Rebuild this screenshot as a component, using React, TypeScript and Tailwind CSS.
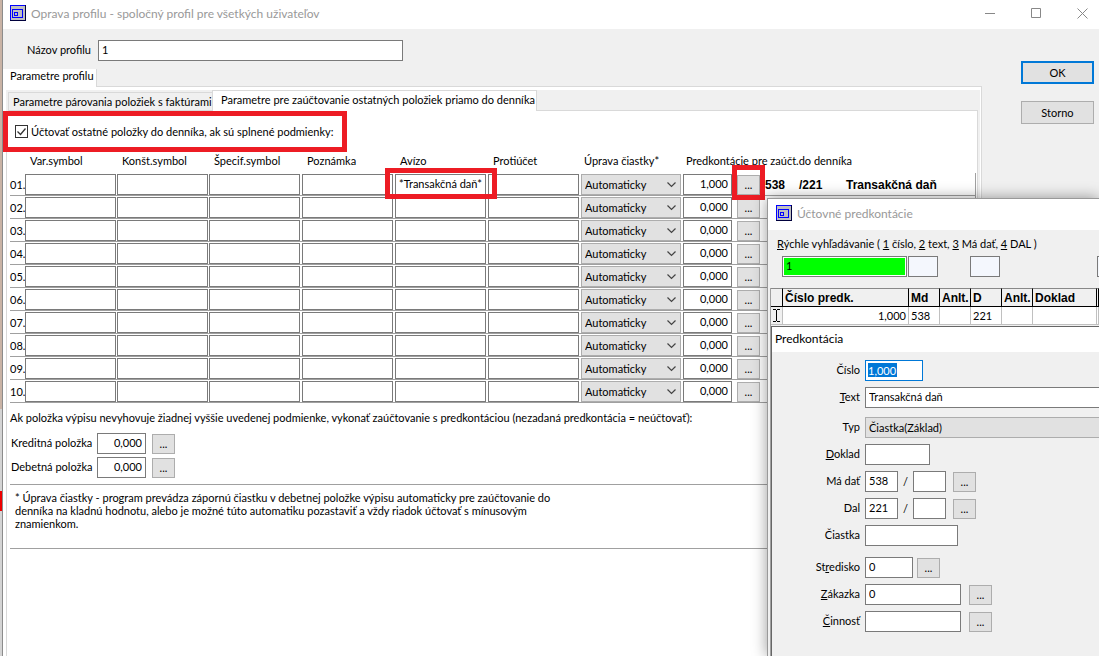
import type { ReactNode } from 'react';
import clsx from 'clsx';

const rows = Array.from({ length: 10 }, (_, i) => ({
  num: String(i + 1).padStart(2, '0'),
  avizo: i === 0 ? '*Transakčná daň*' : '',
  amount: i === 0 ? '1,000' : '0,000',
}));

const textColumns = ['Var.symbol', 'Konšt.symbol', 'Špecif.symbol', 'Poznámka', 'Avízo', 'Protiúčet'];

function AppIcon() {
  return (
    <svg className="w-4 h-4 shrink-0" viewBox="0 0 16 16" shapeRendering="crispEdges">
      <rect width="16" height="16" fill="#00003c" />
      <rect width="15" height="15" fill="#0000ff" />
      <rect x="1" y="1" width="14" height="14" fill="#c0c0c0" />
      <rect x="2.5" y="4.5" width="10" height="8" fill="none" stroke="#0000ff" />
      <rect x="4.5" y="7.5" width="3" height="3" fill="none" stroke="#0000ff" />
    </svg>
  );
}

function DotsButton({ label }: { label: string }) {
  return (
    <button
      type="button"
      aria-label={label}
      className="block shrink-0 w-[23px] h-[20px] border border-[#adadad] bg-[#e1e1e1] text-center leading-[18px]"
    >
      ...
    </button>
  );
}

type BoxProps = { id?: string; label?: string; value?: string; tinted?: boolean; className?: string };

function TextBox({ id, label, value = '', tinted, className }: BoxProps) {
  return (
    <input
      id={id}
      type="text"
      aria-label={label}
      defaultValue={value}
      className={clsx(
        'block h-[21px] border border-[#7a7a7a] px-[3px] pb-[3px] outline-none',
        tinted ? 'bg-[#f4f7fd]' : 'bg-white',
        className
      )}
    />
  );
}

function Field({ id, label, children }: { id: string; label: ReactNode; children: ReactNode }) {
  return (
    <div className="flex items-center">
      <label htmlFor={id} className="w-[88px] mr-[5px] pb-[2px] shrink-0 text-right">
        {label}
      </label>
      {children}
    </div>
  );
}

// Rows of matching conditions with the posting rule for each
function ConditionsTable() {
  return (
    <table className="w-full table-fixed border-separate border-spacing-0">
      <colgroup>
        <col className="w-[15px]" />
        <col className="w-[92px]" />
        <col className="w-[92px]" />
        <col className="w-[93px]" />
        <col className="w-[93px]" />
        <col className="w-[93px]" />
        <col className="w-[93px]" />
        <col className="w-[102px]" />
        <col className="w-[54px]" />
        <col className="w-[28px]" />
        <col />
      </colgroup>
      <thead>
        <tr className="h-[21px] text-left align-top leading-[18px]">
          <td className="p-0" />
          {textColumns.map((name) => (
            <th key={name} className="p-0 pl-[5px] font-normal">
              {name}
            </th>
          ))}
          <th className="p-0 pl-[3px] font-normal">Úprava čiastky*</th>
          <th colSpan={3} className="p-0 pl-[3px] font-normal">
            Predkontácie pre zaúčt.do denníka
          </th>
        </tr>
      </thead>
      <tbody>
        {rows.map((row, i) => (
          <tr key={row.num} className="h-[23px] *:border-b *:border-[#a0a0a0] *:p-0">
            <td className="whitespace-nowrap">{row.num}.</td>
            {textColumns.map((name) => (
              <td key={name} className="relative">
                <TextBox
                  label={`${name} ${row.num}`}
                  value={name === 'Avízo' ? row.avizo : ''}
                  className="w-[91px] mt-px"
                />
                {i === 0 && name === 'Avízo' && (
                  <span className="absolute z-10 -left-[10px] -top-[5px] w-[112px] h-[31px] border-5 border-[#ed1c24] pointer-events-none" />
                )}
              </td>
            ))}
            <td>
              <div className="relative mt-px w-[100px]">
                <select
                  aria-label={`Úprava čiastky ${row.num}`}
                  className="block appearance-none w-full h-[21px] border border-[#adadad] bg-[#e1e1e1] pl-[3px]"
                >
                  <option>Automaticky</option>
                </select>
                <svg className="absolute right-[5px] top-2 w-[9px] h-[6px] pointer-events-none" viewBox="0 0 9 6">
                  <path d="M.5.5l4 4 4-4" fill="none" stroke="#444" strokeWidth="1.2" />
                </svg>
              </div>
            </td>
            <td>
              <TextBox label={`Predkontácia ${row.num}`} value={row.amount} className="w-[49px] mt-px text-right" />
            </td>
            <td className="relative align-bottom">
              <DotsButton label={`Vybrať predkontáciu ${row.num}`} />
              {i === 0 && (
                <span className="absolute z-10 -left-[5px] -top-[8px] w-[33px] h-[35px] border-5 border-[#ed1c24] pointer-events-none" />
              )}
            </td>
            <td className="border-r font-['Liberation_Sans'] text-[12px] font-bold whitespace-nowrap">
              {i === 0 && (
                <div className="flex pt-[3px]">
                  <span className="w-[34px]">538</span>
                  <span className="w-[47px]">/221</span>
                  <span>Transakčná daň</span>
                </div>
              )}
            </td>
          </tr>
        ))}
      </tbody>
    </table>
  );
}

function PostingDialog() {
  return (
    <section className="flex-1 border-l border-t border-[#666] bg-[#f0f0f0]">
      <h2 className="h-[25px] bg-white pl-[3px] text-[12px] leading-[23px]">Predkontácia</h2>
      <form className="pt-2">
        <div className="flex flex-col gap-1.5">
          <Field id="cislo" label="Číslo">
            <div className="h-[21px] w-[58px] border border-[#0078d7] bg-white p-[2px]">
              <input
                id="cislo"
                type="text"
                defaultValue="1,000"
                className="block h-[14px] w-[29px] bg-[#0078d7] text-white outline-none"
              />
            </div>
          </Field>
          <Field id="text" label={<><u>T</u>ext</>}>
            <TextBox id="text" value="Transakčná daň" className="flex-1 min-w-0 border-r-0" />
          </Field>
        </div>
        <div className="mt-[9px] flex flex-col gap-1.5">
          <Field id="typ" label="Typ">
            <select id="typ" className="block appearance-none flex-1 h-[21px] border border-r-0 border-[#adadad] bg-[#e1e1e1] pl-[3px]">
              <option>Čiastka(Základ)</option>
            </select>
          </Field>
          <Field id="doklad" label={<><u>D</u>oklad</>}>
            <TextBox id="doklad" className="w-[65px]" />
          </Field>
          <Field id="madat" label="Má dať">
            <TextBox id="madat" value="538" className="w-[33px]" />
            <span className="w-[15px] text-center">/</span>
            <TextBox label="Má dať analytika" className="w-[33px] mr-[7px]" />
            <DotsButton label="Vybrať účet Má dať" />
          </Field>
          <Field id="dal" label="Dal">
            <TextBox id="dal" value="221" className="w-[33px]" />
            <span className="w-[15px] text-center">/</span>
            <TextBox label="Dal analytika" className="w-[33px] mr-[7px]" />
            <DotsButton label="Vybrať účet Dal" />
          </Field>
          <Field id="ciastka" label="Čiastka">
            <TextBox id="ciastka" className="w-[93px]" />
          </Field>
        </div>
        <div className="mt-[11px] flex flex-col gap-1.5">
          <Field id="stredisko" label={<>St<u>r</u>edisko</>}>
            <TextBox id="stredisko" value="0" className="w-[48px] mr-1" />
            <DotsButton label="Vybrať stredisko" />
          </Field>
          <Field id="zakazka" label={<><u>Z</u>ákazka</>}>
            <TextBox id="zakazka" value="0" className="w-[96px] mr-2" />
            <DotsButton label="Vybrať zákazku" />
          </Field>
          <Field id="cinnost" label={<><u>Č</u>innosť</>}>
            <TextBox id="cinnost" className="w-[96px] mr-2" />
            <DotsButton label="Vybrať činnosť" />
          </Field>
        </div>
      </form>
    </section>
  );
}

// Window with the list of posting rules, lies over the profile window
function PostingWindow() {
  return (
    <div className="absolute z-20 left-[767px] top-[198px] right-0 bottom-0 flex flex-col border-l border-t border-[#999] bg-[#f0f0f0] shadow-[0_0_14px_rgba(0,0,0,0.4)]">
      <header className="flex items-center gap-[5px] h-[31px] shrink-0 bg-white pl-2 pb-[3px]">
        <AppIcon />
        <h2 className="text-[12px] text-[#999]">Účtovné predkontácie</h2>
      </header>
      <div className="pl-[9px] leading-[27px] h-[26px] whitespace-nowrap">
        <u>R</u>ýchle vyhľadávanie ( <u>1</u> číslo, <u>2</u> text, <u>3</u> Má dať, <u>4</u> DAL )
      </div>
      <div className="flex pl-[14px] mb-[11px]">
        <input
          type="text"
          aria-label="Číslo"
          defaultValue="1"
          className="block w-[125px] h-[21px] mr-px border border-[#7a7a7a] px-[3px] pb-[3px] bg-[#00ff00] shadow-[inset_0_0_0_1px_white] outline-none"
        />
        <TextBox tinted label="Text" className="w-[30px] mr-8" />
        <TextBox tinted label="Má dať" className="w-[30px] mr-[97px]" />
        <TextBox tinted label="DAL" className="flex-1 min-w-0" />
      </div>
      <div className="flex-1 flex flex-col ml-[2px] border-l border-[#a0a0a0]">
        <table className="w-full table-fixed border-separate border-spacing-0 bg-white">
          <colgroup>
            <col className="w-[12px]" />
            <col className="w-[126px]" />
            <col className="w-[31px]" />
            <col className="w-[31px]" />
            <col className="w-[31px]" />
            <col className="w-[31px]" />
            <col className="w-[64px]" />
            <col />
          </colgroup>
          <thead>
            <tr className="h-[19px] text-left font-['Liberation_Sans'] text-[12px] leading-[16px] whitespace-nowrap *:border-y *:border-r *:border-black *:border-t-[#888] *:bg-[#f0f0f0] *:p-0 *:pl-[2px]">
              <td />
              <th>Číslo predk.</th>
              <th>Md</th>
              <th>Anlt.</th>
              <th>D</th>
              <th>Anlt.</th>
              <th>Doklad</th>
              <td />
            </tr>
          </thead>
          <tbody>
            <tr className="h-[18px] *:border-b *:border-r *:border-[#c0c0c0] *:p-0 *:px-[2px]">
              <td className="bg-[#f0f0f0] border-r-black">
                <svg className="w-[7px] h-[13px]" viewBox="0 0 7 13" shapeRendering="crispEdges">
                  <path d="M0 .5h3M4 .5h3M3.5 1v11M0 12.5h3M4 12.5h3" stroke="#000" fill="none" />
                </svg>
              </td>
              <td className="text-right">1,000</td>
              <td>538</td>
              <td />
              <td>221</td>
              <td />
              <td />
              <td />
            </tr>
          </tbody>
        </table>
        <div className="h-px" />
        <PostingDialog />
      </div>
    </div>
  );
}

export default function App() {
  return (
    <div className="relative flex min-h-screen overflow-hidden bg-[#f0f0f0] font-['Lato',sans-serif] text-[11px] leading-[13px] text-black">
      {/* Edge of the window behind */}
      <div className="flex flex-col w-[3px] shrink-0 border-r border-[#8c8c8c] bg-[#d4d4d4]">
        <div className="h-[409px] bg-[#c9b3a5]" />
        <div className="mt-[82px] h-5 bg-[#ee0000]" />
      </div>

      <div className="flex-1 min-w-0 flex flex-col">
        <header className="flex items-center h-[29px] bg-white pl-[7px] pr-[11px] pb-[3px]">
          <AppIcon />
          <h1 className="ml-[5px] flex-1 text-[12px] text-[#999]">
            Oprava profilu - spoločný profil pre všetkých uživateľov
          </h1>
          <div className="flex gap-[35px]">
            {[
              { name: 'Minimalizovať', d: 'M0 5.5h10' },
              { name: 'Maximalizovať', d: 'M.5.5h9v9h-9z' },
              { name: 'Zavrieť', d: 'M.5.5l10 10M10.5.5l-10 10' },
            ].map((item) => (
              <button key={item.name} type="button" aria-label={item.name}>
                <svg className="block w-[11px] h-[11px]" viewBox="0 0 11 11">
                  <path d={item.d} fill="none" stroke="#888" />
                </svg>
              </button>
            ))}
          </div>
        </header>

        <div className="flex-1 flex">
          <main className="flex-1 min-w-0 flex flex-col pt-[11px]">
            <div className="flex items-center pl-6">
              <label htmlFor="profil" className="w-[71px] pb-[2px]">
                Názov profilu
              </label>
              <TextBox id="profil" value="1" className="w-[305px]" />
            </div>

            <div className="mt-2 flex h-[18px]" role="tablist">
              <button
                type="button"
                role="tab"
                aria-selected="true"
                className="w-[94px] border-r border-[#d9d9d9] bg-white pl-[7px] pb-[5px] text-left whitespace-nowrap"
              >
                Parametre profilu
              </button>
              <div className="flex-1 border-b border-[#d9d9d9]" />
            </div>

            <div className="flex-1 flex border-r border-[#d9d9d9] bg-white pl-[3px] pt-[3px] pr-px">
              <div className="flex-1 min-w-0 flex flex-col bg-[#f0f0f0] pr-[2px]">
                <div className="flex items-end h-[21px]" role="tablist">
                  <button
                    type="button"
                    role="tab"
                    aria-selected="false"
                    className="ml-[2px] h-[19px] w-[204px] border border-r-0 border-[#d9d9d9] pl-1 text-left whitespace-nowrap"
                  >
                    Parametre párovania položiek s faktúrami
                  </button>
                  <button
                    type="button"
                    role="tab"
                    aria-selected="true"
                    className="h-[21px] w-[325px] border border-b-0 border-[#d9d9d9] bg-white pl-2 pb-[3px] text-left whitespace-nowrap"
                  >
                    Parametre pre zaúčtovanie ostatných položiek priamo do denníka
                  </button>
                  <div className="flex-1 self-stretch border-b border-[#d9d9d9]" />
                </div>

                <div className="flex-1 border-x border-[#d9d9d9] bg-white">
                  <div className="relative flex items-center h-[41px] pl-2">
                    <input
                      id="uctovat"
                      type="checkbox"
                      defaultChecked
                      className="appearance-none w-[13px] h-[13px] border border-[#333] bg-white"
                    />
                    <svg className="absolute left-2 w-[13px] h-[13px] pointer-events-none" viewBox="0 0 13 13">
                      <path d="M2.5 6.5l3 3 5-6" fill="none" stroke="#333" strokeWidth="1.3" />
                    </svg>
                    <label htmlFor="uctovat" className="ml-[3px]">
                      Účtovať ostatné položky do denníka, ak sú splnené podmienky:
                    </label>
                    <span className="absolute z-10 -left-1 inset-y-0 w-[344px] border-5 border-[#ed1c24] pointer-events-none" />
                  </div>

                  <div className="pl-[3px] pr-px">
                    <ConditionsTable />

                    <p className="leading-[30px]">
                      Ak položka výpisu nevyhovuje žiadnej vyššie uvedenej podmienke, vykonať zaúčtovanie s predkontáciou
                      (nezadaná predkontácia = neúčtovať):
                    </p>
                    <div className="flex flex-col gap-[3px]">
                      {['Kreditná položka', 'Debetná položka'].map((name) => (
                        <div key={name} className="flex items-center pl-px">
                          <label htmlFor={name} className="w-[86px] pb-[2px]">
                            {name}
                          </label>
                          <TextBox id={name} value="0,000" className="w-[49px] mr-[6px] text-right" />
                          <DotsButton label={`Vybrať ${name}`} />
                        </div>
                      ))}
                    </div>

                    <p className="mt-[6px] border-y border-[#a0a0a0] pt-[6px] pb-[18px] pl-[5px]">
                      * Úprava čiastky - program prevádza zápornú čiastku v debetnej položke výpisu automaticky pre
                      zaúčtovanie do
                      <br />
                      denníka na kladnú hodnotu, alebo je možné túto automatiku pozastaviť a vždy riadok účtovať s
                      mínusovým
                      <br />
                      znamienkom.
                    </p>
                  </div>
                </div>
              </div>
            </div>
          </main>

          <div className="flex flex-col gap-[17px] pt-8 pl-[39px] pr-[5px]">
            <button type="button" className="w-[73px] h-[23px] border-2 border-[#0078d7] bg-[#e1e1e1]">
              OK
            </button>
            <button type="button" className="w-[73px] h-[23px] border border-[#adadad] bg-[#e1e1e1]">
              Storno
            </button>
          </div>
        </div>
      </div>

      <PostingWindow />
    </div>
  );
}
